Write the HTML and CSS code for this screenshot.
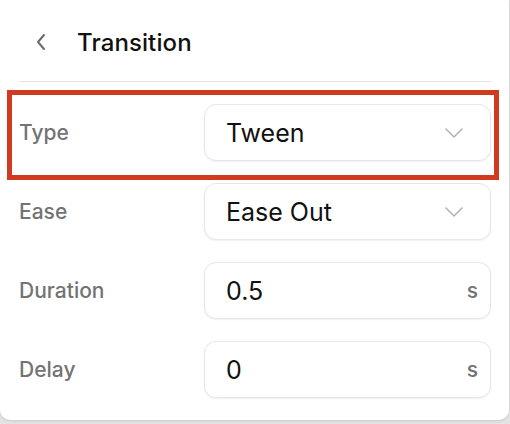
FILE: index.html
```html
<!DOCTYPE html>
<html>
<head>
<meta charset="utf-8">
<link rel="stylesheet" href="styles.css">
</head>
<body>
<div class="panel">
  <div class="header">
    <svg class="back" width="12" height="18" viewBox="0 0 12 18"><path d="M9 2 L3 9 L9 16" fill="none" stroke="#6b6b6b" stroke-width="2" stroke-linecap="round" stroke-linejoin="round"/></svg>
    <span class="title">Transition</span>
  </div>
  <div class="divider"></div>
  <div class="rows">
    <div class="row highlighted">
      <span class="label">Type</span>
      <div class="control">
        <span class="value">Tween</span>
        <svg class="caret" width="20" height="12" viewBox="0 0 20 12"><path d="M2 2 L10 10 L18 2" fill="none" stroke="#b3b3b3" stroke-width="1.6" stroke-linecap="round" stroke-linejoin="round"/></svg>
      </div>
    </div>
    <div class="row">
      <span class="label">Ease</span>
      <div class="control">
        <span class="value">Ease Out</span>
        <svg class="caret" width="20" height="12" viewBox="0 0 20 12"><path d="M2 2 L10 10 L18 2" fill="none" stroke="#b3b3b3" stroke-width="1.6" stroke-linecap="round" stroke-linejoin="round"/></svg>
      </div>
    </div>
    <div class="row">
      <span class="label">Duration</span>
      <div class="control">
        <span class="value">0.5</span>
        <span class="unit">s</span>
      </div>
    </div>
    <div class="row">
      <span class="label">Delay</span>
      <div class="control">
        <span class="value">0</span>
        <span class="unit">s</span>
      </div>
    </div>
  </div>
</div>
</body>
</html>
```

FILE: styles.css
```css
html, body {
  margin: 0;
  padding: 0;
}
body {
  width: 510px;
  height: 424px;
  background: #e4e4e4;
  font-family: Inter, "Noto Sans", sans-serif;
  overflow: hidden;
}
.panel {
  width: 509px;
  height: 420px;
  box-sizing: border-box;
  background: #ffffff;
  border-radius: 0 0 10px 10px;
  box-shadow: 0 1px 3px rgba(0, 0, 0, 0.12);
  padding: 0 18px 0 19px;
  display: flex;
  flex-direction: column;
}
.header {
  height: 81px;
  display: flex;
  align-items: center;
  padding-left: 16px;
  gap: 30px;
  padding-top: 3px;
  box-sizing: border-box;
}
.back {
  display: block;
}
.title {
  font-size: 24px;
  font-weight: 550;
  color: #111111;
  letter-spacing: 0.1px;
}
.divider {
  height: 1px;
  background: #e4e4e4;
}
.rows {
  display: flex;
  flex-direction: column;
  gap: 22px;
  padding-top: 22px;
}
.row {
  display: flex;
  align-items: center;
  height: 57px;
  position: relative;
}
.highlighted::after {
  content: "";
  position: absolute;
  left: -12px;
  right: -8px;
  top: -14px;
  bottom: -19px;
  border: 5px solid #d13a1f;
}
.label {
  width: 185px;
  flex: none;
  font-size: 21px;
  font-weight: 500;
  color: #737373;
}
.control {
  flex: 1;
  height: 57px;
  box-sizing: border-box;
  border: 1px solid #e6e6e6;
  border-radius: 12px;
  box-shadow: 0 1px 2px rgba(0, 0, 0, 0.06);
  display: flex;
  align-items: center;
  justify-content: space-between;
  padding: 0 26px 0 21px;
  background: #fff;
}
.value {
  font-size: 25px;
  color: #111111;
}
.caret {
  display: block;
}
.unit {
  font-size: 21px;
  color: #737373;
  font-weight: 500;
  margin-right: -14px;
}
```
